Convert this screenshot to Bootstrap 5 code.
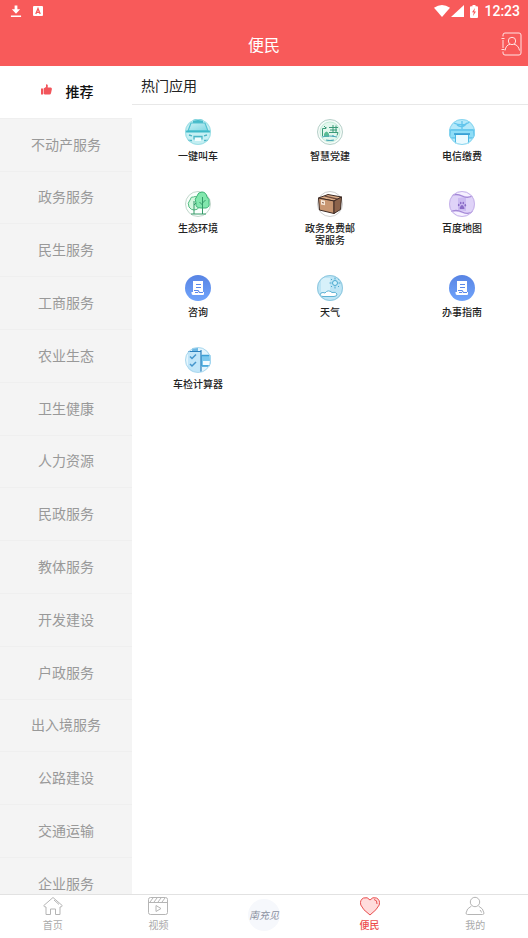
<!DOCTYPE html>
<html lang="zh-CN">
<head>
<meta charset="utf-8">
<meta name="viewport" content="width=device-width, initial-scale=1">
<title>便民</title>
<link href="https://cdn.jsdelivr.net/npm/bootstrap@5.3.0/dist/css/bootstrap.min.css" rel="stylesheet">
<style>
  body { font-family: "Noto Sans CJK SC", sans-serif; color: #222; background: #fff; }
  a { color: inherit; text-decoration: none; }
  svg { display: block; flex: none; }
  .app-top { background: #f85a5a; color: #fff; }
  .status-bar { height: 22px; padding: 0 8px 0 10px; }
  .status-bar time { font: 500 14px/22px Roboto, sans-serif; }
  .status-icons { gap: 6px; }
  .signal-icons { gap: 1px; }
  .title-bar { height: 44px; padding: 0 6px; display: grid; grid-template-columns: 1fr auto 1fr; }
  .title-bar h1 { font-size: 16px; line-height: 24px; font-weight: 400; }
  .side-menu { width: 25%; background: #f4f4f4; }
  .side-item { aspect-ratio: 5 / 2; flex: none; border: 0; border-bottom: 1px solid #efefef; background: transparent; color: #999; font-size: 14px; line-height: 20px; padding: 0 0 2px; }
  .side-item.active { background: #fff; color: #111; font-weight: 500; gap: 14px; padding-left: 2px; }
  .section-title { height: 39px; padding: 0 9px; font-size: 14px; line-height: 39px; font-weight: 400; border-bottom: 1px solid #e8e8e8; }
  .app-grid { padding-top: 14px; row-gap: 29px; }
  .app-link { font-size: 10px; line-height: 12px; font-weight: 500; gap: 5px; }
  .app-link span { max-width: 56px; }
  .tab-bar { border-top: 1px solid #e2e2e2; height: 44px; }
  .tab-link { flex: 1 1 0; font-size: 10px; line-height: 14px; color: #aaa; gap: 2px; padding-top: 1px; }
  .tab-link.active { color: #ed4c4c; font-weight: 500; }
  .tab-link.tab-brand { padding: 0 0 3px; }
  .brand-mark { width: 32px; height: 32px; background: #f6f8fc; color: #8b90a0; font: italic 10px/32px "Noto Sans CJK SC", sans-serif; }
</style>
<script src="https://cdn.jsdelivr.net/npm/bootstrap@5.3.0/dist/js/bootstrap.bundle.min.js"></script>
</head>
<body>
<div class="vh-100 d-flex flex-column overflow-hidden">
  <header class="app-top">
    <div class="status-bar d-flex align-items-center justify-content-between">
      <div class="d-flex align-items-center gap-2">
        <svg width="12" height="14" viewBox="0 0 13 14" fill="#fff"><path d="M5 1h3v4h3L6.500 10 2 5h3zM1 12h11v1.500H1z"/></svg>
        <svg width="14" height="10" viewBox="-3 0 14 10"><rect width="10" height="10" rx="1" fill="#fff"/><path d="M2.800 8 5 2.500 7.200 8M3.500 6.300h3" fill="none" stroke="#f85a5a" stroke-width="1.300"/></svg>
      </div>
      <div class="status-icons d-flex align-items-center">
        <div class="signal-icons d-flex">
          <svg width="16" height="12" viewBox="0 0 16 12" fill="#fff"><path d="M0 2.700Q8-2.500 16 2.700L8 12z"/></svg>
          <svg width="13" height="12" viewBox="0 0 13 12" fill="#fff"><path d="M13 0v12H0z"/></svg>
        </div>
        <svg width="8" height="13" viewBox="0 0 8 13"><path d="M2.500 0h3v1.300H7q1 0 1 1V12q0 1-1 1H1q-1 0-1-1V2.300q0-1 1-1h1.500z" fill="#fff"/><path d="M5 3 2 7.300h1.800L3 11l3-4.500H4.200z" fill="#f85a5a"/></svg>
        <time>12:23</time>
      </div>
    </div>
    <div class="title-bar align-items-center">
      <span></span>
      <h1 class="m-0">便民</h1>
      <button type="button" class="btn p-0 border-0 ms-auto" aria-label="通讯录">
        <svg width="21" height="24" viewBox="0 0 21 24" fill="none" stroke="#ffe3e3" stroke-width="1"><path d="M2 4.500V3q0-2 2-2h14q2 0 2 2v18q0 2-2 2H4q-2 0-2-2v-1.500M2 8v8M.5 6.500h3M.5 17.500h3"/><circle cx="11" cy="9" r="3.700"/><path d="M4 18.500q1-5.500 5-6.300M13 12.200q4.500 1 5.500 6.300"/></svg>
      </button>
    </div>
  </header>

  <main class="d-flex flex-grow-1 overflow-hidden">
    <nav class="side-menu d-flex flex-column overflow-hidden flex-shrink-0" aria-label="服务分类">
      <button type="button" class="side-item active d-flex align-items-center justify-content-center">
        <svg width="11" height="14" viewBox="0 0 11 14" fill="#f2555b"><path d="M0 4.500h2v6H0zM2.600 4.500 5 3V.8Q5.200 0 6 .3 7.300.8 6.700 3.600h3q1.300.2 1.200 1.400L10 9.300Q9.700 10.500 8.500 10.500H4L2.600 10z"/></svg>
        推荐</button>
      <button type="button" class="side-item">不动产服务</button>
      <button type="button" class="side-item">政务服务</button>
      <button type="button" class="side-item">民生服务</button>
      <button type="button" class="side-item">工商服务</button>
      <button type="button" class="side-item">农业生态</button>
      <button type="button" class="side-item">卫生健康</button>
      <button type="button" class="side-item">人力资源</button>
      <button type="button" class="side-item">民政服务</button>
      <button type="button" class="side-item">教体服务</button>
      <button type="button" class="side-item">开发建设</button>
      <button type="button" class="side-item">户政服务</button>
      <button type="button" class="side-item">出入境服务</button>
      <button type="button" class="side-item">公路建设</button>
      <button type="button" class="side-item">交通运输</button>
      <button type="button" class="side-item">企业服务</button>
    </nav>

    <section class="flex-grow-1">
      <h2 class="section-title m-0">热门应用</h2>
      <div class="app-grid row row-cols-3 gx-0">
        <div class="col"><a href="#" class="app-link d-flex flex-column align-items-center text-center">
          <svg width="26" height="26" viewBox="0 0 26 26"><defs><clipPath id="disc"><circle cx="13" cy="13" r="13"/></clipPath><linearGradient id="teal" x2="1" y2="1"><stop stop-color="#c9f1f5"/><stop offset="1" stop-color="#7fd7e2"/></linearGradient></defs>
          <g clip-path="url(#disc)"><path fill="#c3eef2" d="M0 0h26v26H0z"/><path fill="#45bbc9" d="M8 0h10v4H8z"/><path d="M6 4h14l3 8H3z" fill="url(#teal)" stroke="#52c2d0" stroke-width="1.200"/><path d="M-1 12.500h28V22H-1z" fill="#c6f0f4"/><path d="M0 12.500h26" stroke="#3db9c8" stroke-width="2"/><path d="M9 20.500v-3h8v3M4 16l3 .8M22 16l-3 .8M0 21.500h7m12 0h7" fill="none" stroke="#4cb6c6" stroke-width="1.300"/><path fill="#f2fdfd" d="M10 19h6v3h-6z"/></g><circle cx="13" cy="13" r="12.500" fill="none" stroke="#9edfe6"/></svg>
          <span>一键叫车</span></a></div>
        <div class="col"><a href="#" class="app-link d-flex flex-column align-items-center text-center">
          <svg width="26" height="26" viewBox="0 0 26 26" fill="none"><circle cx="13" cy="13" r="12.500" fill="#f5fcf9" stroke="#b5cfc8"/><circle cx="13" cy="13" r="10" fill="#e2f7ed" stroke="#c4ecd9"/><path d="M5.500 9.500H9V8M5.500 9.500V17M7 7l2 2M12 8.500h9M13 11h7M16 6v7M12 13.500h9l-1 3M19 6.500V13" stroke="#3b9b79" stroke-width="1"/><path d="M7 15q2.500-5 5 0v3H7z" fill="#58bc93"/><path d="M5 18q7-2 15 0M9 21q4 1 8 0M16 16v2" stroke="#4ba9b7" stroke-width="1.200"/></svg>
          <span>智慧党建</span></a></div>
        <div class="col"><a href="#" class="app-link d-flex flex-column align-items-center text-center">
          <svg width="26" height="26" viewBox="0 0 26 26"><g clip-path="url(#disc)"><path fill="#b4e9fa" d="M0 0h26v26H0z"/><path d="M5 4q8 4 16-1M13 2v8M8 6q5 4 10-2" fill="none" stroke="#62c5ec" stroke-width="1.300"/><path fill="#8eddf7" d="M0 10h26v9H0z"/><path d="M1 11h24v8H1z" fill="none" stroke="#49b7e6" stroke-width="1.200"/><path fill="#eafaff" stroke="#4bb8e4" d="M6.500 15.500h13V27h-13z"/><path d="M5 15h16" stroke="#3098d0" stroke-width="1.500"/></g><circle cx="13" cy="13" r="12.500" fill="none" stroke="#8bd6ef"/></svg>
          <span>电信缴费</span></a></div>
        <div class="col"><a href="#" class="app-link d-flex flex-column align-items-center text-center">
          <svg width="26" height="26" viewBox="0 0 26 26" fill="none"><circle cx="13" cy="13" r="12.500" fill="#fafffc" stroke="#c2d7cc"/><path d="M8.500 6Q6 5 5 9q-3 3-1 7 2 3 5 3 4 0 5-3V9Q12 4 8.500 6z" fill="#d4f7df" stroke="#55bc83"/><path d="M17 1q-4 0-5 4-3 3-1 7-1 5 5 5h5q4-1 3-5 1-4-2-6Q21 1 17 1z" fill="#82e7ad" stroke="#3eb477"/><path d="M17.500 6v17M17.500 12l3-3M17.500 14l-3-3M9 10v13M9 14l2-2M6 23h15" stroke="#359a69" stroke-width="1"/></svg>
          <span>生态环境</span></a></div>
        <div class="col"><a href="#" class="app-link d-flex flex-column align-items-center text-center">
          <svg width="26" height="26" viewBox="0 0 26 26"><circle cx="13" cy="13" r="12.500" fill="#fff" stroke="#cfcfcf"/><g stroke="#3e2b24" stroke-width="1" stroke-linejoin="round"><path fill="#dbad88" d="M1.500 7 11 3.500 24.500 6 17 10z"/><path fill="#c99772" d="M1.500 7 17 10v12.500L2.500 19z"/><path fill="#8c634b" d="m17 10 7.500-4-1 12.500-6.500 4z"/></g><path fill="#6d493a" d="m7 5.500 2-.7L21 7.500l-2 1z"/><path fill="#f8e8d8" d="m4 9 4 .8v4.500l-4-.8z"/><path d="m5 11.500 2 .5" stroke="#8a6450"/></svg>
          <span>政务免费邮寄服务</span></a></div>
        <div class="col"><a href="#" class="app-link d-flex flex-column align-items-center text-center">
          <svg width="26" height="26" viewBox="0 0 26 26"><g clip-path="url(#disc)"><path fill="#dfd3f8" d="M0 0h26v26H0z"/><path fill="#f6f1ff" d="M0 4q6-3 13 0t13-1V0H0zM0 22q6-3 13 0t13-1v5H0z"/><path fill="#cbbaf1" d="M9 7 17 6v14l-8-1z"/><path d="M1 5q6-3 12 0t12-1M1 21q6-3 12 0t12-1" fill="none" stroke="#a387d6" stroke-width="1.300"/><g fill="#8a6bc6"><ellipse cx="9.700" cy="14" rx=".8" ry="1.200"/><ellipse cx="11.700" cy="12" rx=".8" ry="1.200"/><ellipse cx="14.300" cy="12" rx=".8" ry="1.200"/><ellipse cx="16.300" cy="14.300" rx=".8" ry="1.200"/><path d="M13 14q1 0 2 2 1.500 2.500-1.500 2-4 .5-2.500-2 1-2 2-2z"/></g></g><circle cx="13" cy="13" r="12.500" fill="none" stroke="#c6b3e9"/></svg>
          <span>百度地图</span></a></div>
        <div class="col"><a href="#" class="app-link d-flex flex-column align-items-center text-center">
          <svg width="26" height="26" viewBox="0 0 26 26"><defs><linearGradient id="blue" x2="0" y2="1"><stop stop-color="#5884e4"/><stop offset="1" stop-color="#70a4fb"/></linearGradient></defs><circle cx="13" cy="13" r="13" fill="url(#blue)"/><path fill="#fff" d="M8 6h10v11h1v2q0 1-1 1H8q-1.500 0-1.500-2v-1H8z"/><path d="M11 9.500h5M11 12.500h5M9 15.500h4l1.500 2H18M10 17.500h3" fill="none" stroke="#5b89e9" stroke-width="1.200"/></svg>
          <span>咨询</span></a></div>
        <div class="col"><a href="#" class="app-link d-flex flex-column align-items-center text-center">
          <svg width="26" height="26" viewBox="0 0 26 26"><g clip-path="url(#disc)"><path fill="#bde5f5" d="M0 0h26v26H0z"/><path fill="#d7f1fa" d="M4 3h9v14H4z"/><circle cx="18" cy="8" r="2.500" fill="#d3f2fc" stroke="#4ba9cf"/><path d="M18 2.500v2m0 7v2M12.500 8h2m7 0h2M14 4l1 1m6 6 1 1M22 4l-1 1m-6 6-1 1" stroke="#4ba9cf"/><path d="M6 21.500q-4-.5-2-3.500 2-1 4 0 3-4 7-.500 4-1 5 1.500 0 2.500-3 2.500z" fill="#fff" stroke="#5eb2d3"/></g><circle cx="13" cy="13" r="12.500" fill="none" stroke="#8fc7de"/></svg>
          <span>天气</span></a></div>
        <div class="col"><a href="#" class="app-link d-flex flex-column align-items-center text-center">
          <svg width="26" height="26" viewBox="0 0 26 26"><circle cx="13" cy="13" r="13" fill="url(#blue)"/><path fill="#fff" d="M8 6h10v11h1v2q0 1-1 1H8q-1.500 0-1.500-2v-1H8z"/><path d="M11 9.500h5M11 12.500h5M9 15.500h4l1.500 2H18M10 17.500h3" fill="none" stroke="#5b89e9" stroke-width="1.200"/></svg>
          <span>办事指南</span></a></div>
        <div class="col"><a href="#" class="app-link d-flex flex-column align-items-center text-center">
          <svg width="26" height="26" viewBox="0 0 26 26"><g clip-path="url(#disc)"><path fill="#e3f5fd" d="M0 0h26v26H0z"/><path fill="#7bc8ee" d="M16 8h10v11H16z"/><path d="M17 8.500h9M17 19h8" stroke="#3a9fd6" stroke-width="1.300"/><path fill="#f2fbff" d="M18 14h7v4h-7z"/><path fill="#c2e6f9" d="M3 4h13v21H3z"/><path fill="#6cb8e4" d="M7 1h6v4H7z"/><path d="m5 9.500 2 2 4-4M5 17l2 2 4-4" fill="none" stroke="#4595cc" stroke-width="1.500"/><path d="M16 3v22M3 4.500h13" fill="none" stroke="#2b80bd" stroke-width="1.200"/></g><circle cx="13" cy="13" r="12.500" fill="none" stroke="#acd8ee"/></svg>
          <span>车检计算器</span></a></div>
      </div>
    </section>
  </main>

  <nav class="tab-bar d-flex bg-white flex-shrink-0" aria-label="主导航">
    <a href="#" class="tab-link d-flex flex-column align-items-center">
      <svg width="20" height="20" viewBox="0 0 20 20" fill="none" stroke="#b5b5b5" stroke-linejoin="round"><path d="M10 1.500.8 9.500q0 1.500 2.200 1.500v7.500h4.500V13h5v5.500H17V11q2.200 0 2.200-1.500zM11 4l5 4.500"/></svg>首页</a>
    <a href="#" class="tab-link d-flex flex-column align-items-center">
      <svg width="20" height="20" viewBox="0 0 20 20" fill="none" stroke="#b5b5b5" stroke-linejoin="round"><rect x=".5" y="1.500" width="19" height="17" rx="2"/><path d="M.5 6.500h19M2 6l3-4M6 6l3-4M10 6l3-4M14 6l3-4M8 9.500v6l5-3z"/></svg>视频</a>
    <a href="#" class="tab-link tab-brand d-flex flex-column align-items-center justify-content-center">
      <span class="brand-mark rounded-circle text-center">南充见</span></a>
    <a href="#" class="tab-link active d-flex flex-column align-items-center" aria-current="page">
      <svg width="20" height="20" viewBox="0 0 20 20" fill="#ffdcdc" stroke="#e94f4f" stroke-linejoin="round"><path d="M10 19Q2.500 13.500.8 9-.5 4 3.500 2 7.500.5 10 4q2.500-3.500 6.500-2 4 2 2.700 7-2 4.500-9.200 10z"/><path d="M14 3.500q3.500.5 3 4.500" fill="none"/></svg>便民</a>
    <a href="#" class="tab-link d-flex flex-column align-items-center">
      <svg width="20" height="20" viewBox="0 0 20 20" fill="none" stroke="#b5b5b5" stroke-linejoin="round"><circle cx="10" cy="6" r="4.700"/><path d="M6.500 10Q1.500 12.500 1 17q0 1.500 1.500 1.500h15q1.500 0 1.500-1.500-.5-4.500-5.500-7M15 14q1 1 1.500 2.500"/></svg>我的</a>
  </nav>
</div>
</body>
</html>
